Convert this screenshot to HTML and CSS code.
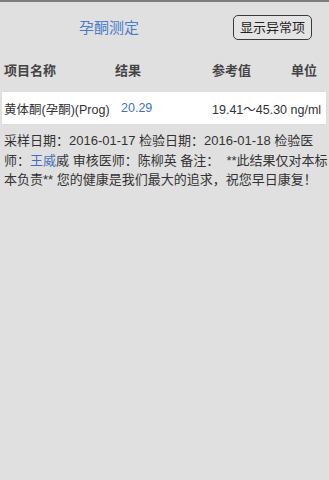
FILE: index.html
```html
<!DOCTYPE html>
<html lang="zh-CN">
<head>
<meta charset="utf-8">
<title>孕酮测定</title>
<link rel="stylesheet" href="styles.css">
</head>
<body>
<div class="page">
  <header class="topbar">
    <h1 class="title">孕酮测定</h1>
    <button class="abn-btn" type="button">显示异常项</button>
  </header>
  <div class="colhead">
    <span class="c-name">项目名称</span>
    <span class="c-result">结果</span>
    <span class="c-ref">参考值</span>
    <span class="c-unit">单位</span>
  </div>
  <div class="row">
    <span class="d-name">黄体酮(孕酮)(Prog)</span>
    <span class="d-result">20.29</span>
    <span class="d-ref">19.41～45.30 ng/ml</span>
  </div>
  <p class="note">采样日期：2016-01-17 检验日期：2016-01-18 检验医师：<span class="link">王威</span>威 审核医师：陈柳英 备注：&nbsp; **此结果仅对本标本负责** 您的健康是我们最大的追求，祝您早日康复！</p>
</div>
</body>
</html>
```

FILE: styles.css
```css
html, body {
  margin: 0;
  padding: 0;
}
body {
  background: #e0e0e0;
  font-family: "Liberation Sans", "Noto Sans CJK SC", sans-serif;
  color: #333;
  font-size: 13px;
}
.page {
  border-top: 2px solid #7d7d7d;
  min-height: 478px;
}
.topbar {
  height: 51px;
  display: flex;
  align-items: center;
}
.title {
  margin: 0 0 0 79px;
  font-size: 15px;
  font-weight: normal;
  color: #4a7ccc;
  flex: 1;
  line-height: 20px;
}
.abn-btn {
  margin-right: 17px;
  height: 25px;
  padding: 0 6px;
  background: #e4e4e4;
  border: 1px solid #3a3a3a;
  border-radius: 5px;
  font-family: inherit;
  font-size: 13px;
  color: #222;
  line-height: 23px;
}
.colhead {
  height: 32px;
  display: flex;
  align-items: center;
  font-weight: bold;
  color: #444;
}
.c-name { width: 111px; padding-left: 4px; }
.c-result { width: 97px; }
.c-ref { width: 79px; }
.row {
  margin: 7px 3px 0 2px;
  height: 32px;
  background: #fff;
  display: flex;
  align-items: center;
  font-size: 12.5px;
}
.d-name { width: 117px; padding-left: 2px; }
.d-result { width: 91px; color: #3d6fc2; }
.d-ref { white-space: nowrap; }
.note {
  margin: 7px 0 0;
  padding: 0 0 0 4px;
  line-height: 19.5px;
}
.link { color: #3d6fc2; }
```
